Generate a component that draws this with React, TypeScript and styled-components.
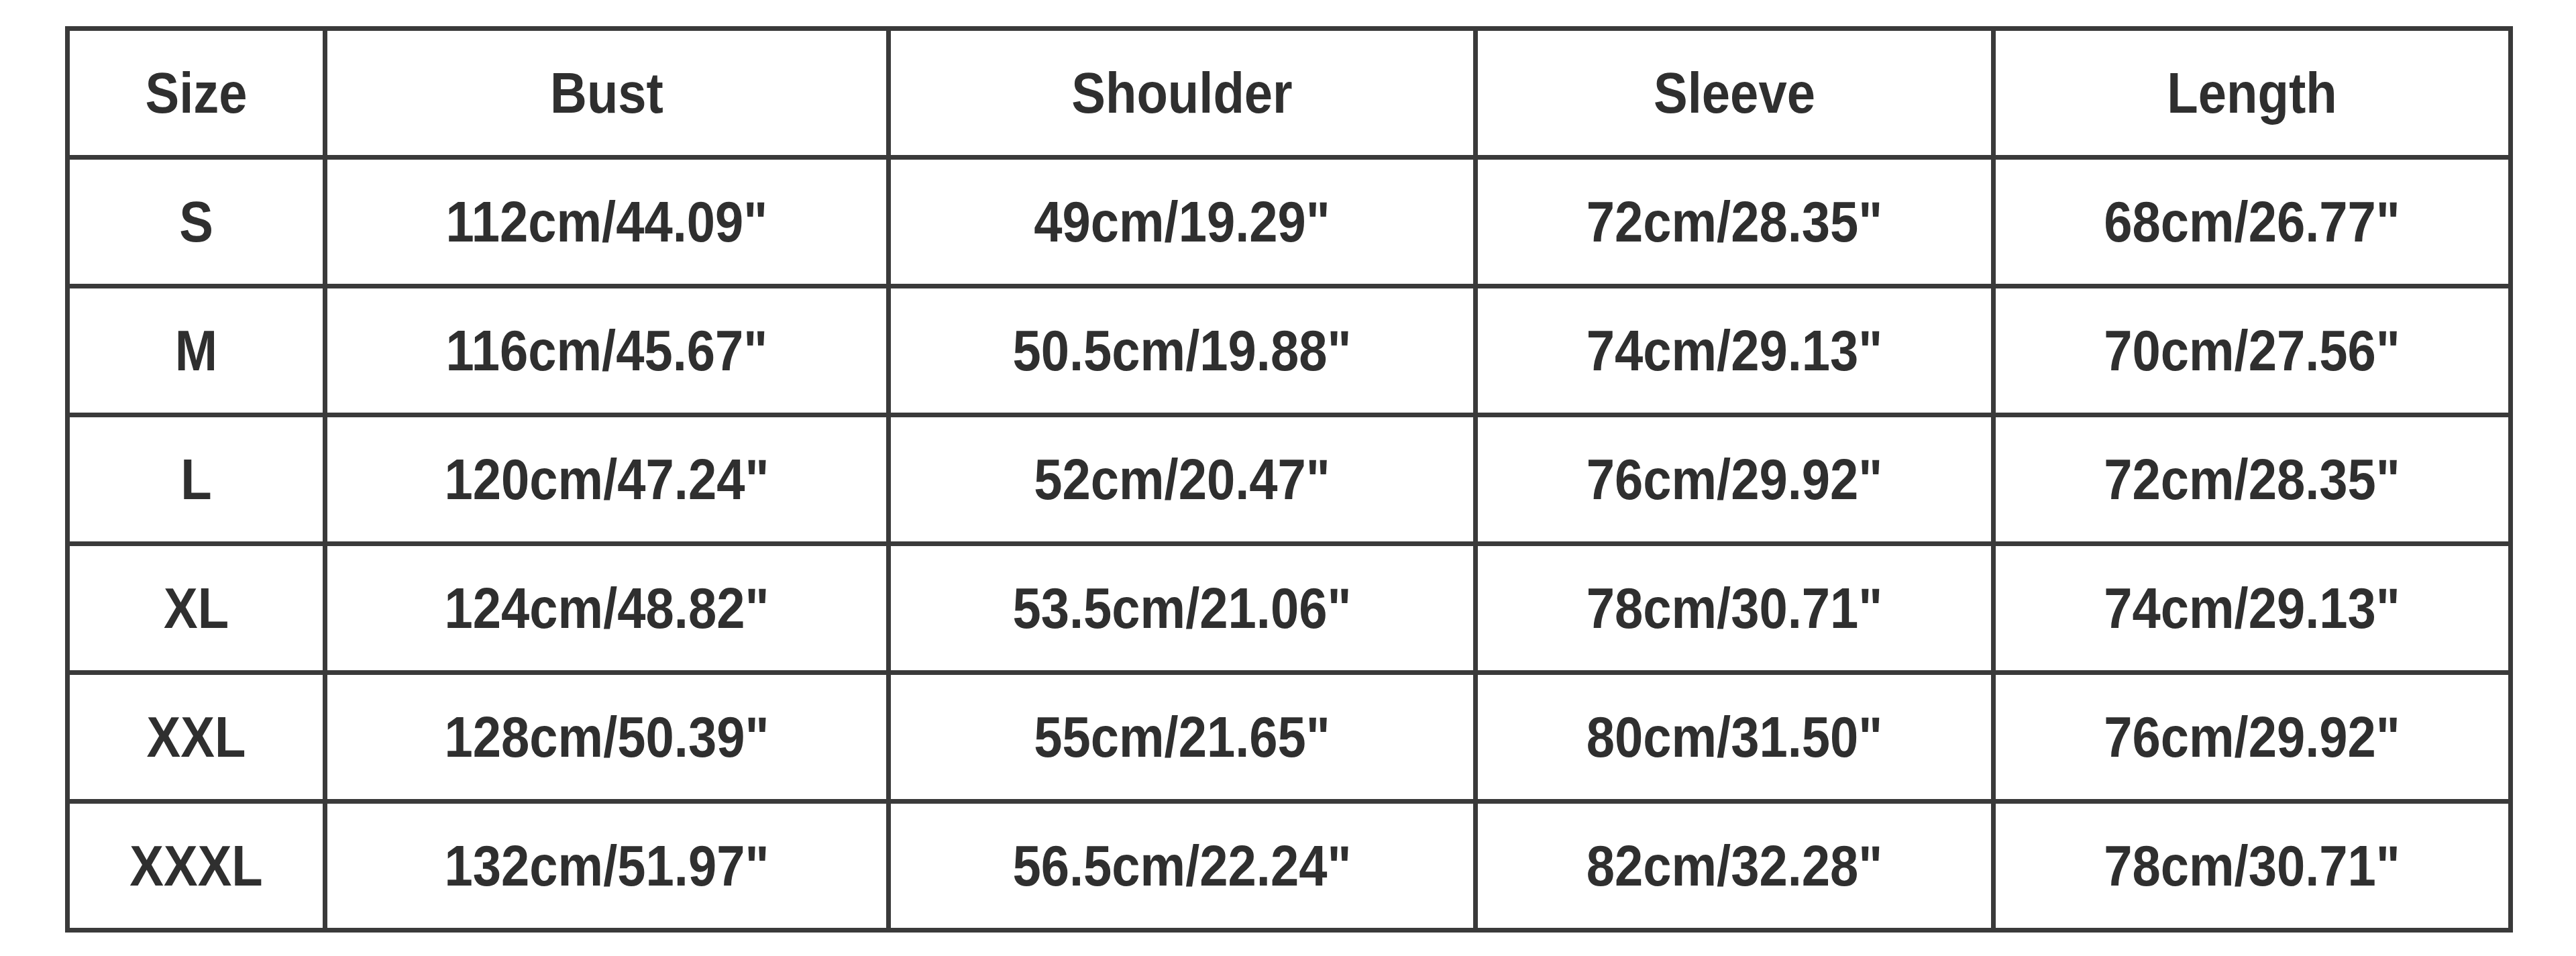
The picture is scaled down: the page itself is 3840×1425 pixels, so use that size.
import React from "react";
import styled, { createGlobalStyle } from "styled-components";

const Global = createGlobalStyle`
  html, body { margin: 0; padding: 0; background: #ffffff; }
  body { font-family: "Liberation Sans", Arial, sans-serif; }
`;

const Page = styled.div`
  width: 3840px;
  height: 1425px;
  box-sizing: border-box;
  padding: 39px 0 0 97px;
  background: #ffffff;
`;

const Grid = styled.div`
  display: grid;
  grid-template-columns: 384px 840px 875px 772px 771px;
  grid-auto-rows: 192px;
  width: max-content;
  border-left: 7px solid #3a3a3a;
  border-top: 7px solid #3a3a3a;
`;

const Cell = styled.div`
  box-sizing: border-box;
  border-right: 7px solid #3a3a3a;
  border-bottom: 7px solid #3a3a3a;
  display: flex;
  align-items: center;
  justify-content: center;
`;

const Label = styled.span`
  display: inline-block;
  font-family: "Liberation Sans", Arial, sans-serif;
  font-weight: 700;
  font-size: 76px;
  line-height: 1;
  color: #2f2f2f;
  transform: scaleY(1.12);
  white-space: nowrap;
`;

const headers = ["Size", "Bust", "Shoulder", "Sleeve", "Length"];

const rows: string[][] = [
  ["S", "112cm/44.09\"", "49cm/19.29\"", "72cm/28.35\"", "68cm/26.77\""],
  ["M", "116cm/45.67\"", "50.5cm/19.88\"", "74cm/29.13\"", "70cm/27.56\""],
  ["L", "120cm/47.24\"", "52cm/20.47\"", "76cm/29.92\"", "72cm/28.35\""],
  ["XL", "124cm/48.82\"", "53.5cm/21.06\"", "78cm/30.71\"", "74cm/29.13\""],
  ["XXL", "128cm/50.39\"", "55cm/21.65\"", "80cm/31.50\"", "76cm/29.92\""],
  ["XXXL", "132cm/51.97\"", "56.5cm/22.24\"", "82cm/32.28\"", "78cm/30.71\""],
];

export default function App() {
  return (
    <>
      <Global />
      <Page>
        <Grid>
          {headers.map((h) => (
            <Cell key={h}>
              <Label>{h}</Label>
            </Cell>
          ))}
          {rows.map((r, i) =>
            r.map((v, j) => (
              <Cell key={`${i}-${j}`}>
                <Label>{v}</Label>
              </Cell>
            ))
          )}
        </Grid>
      </Page>
    </>
  );
}
